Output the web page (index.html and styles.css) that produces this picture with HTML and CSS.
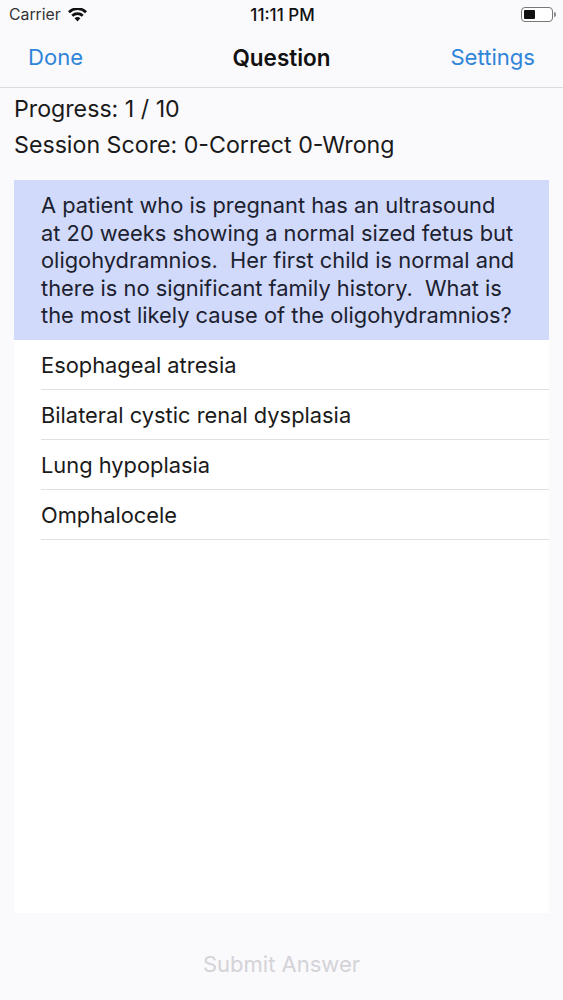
FILE: index.html
```html
<!DOCTYPE html>
<html lang="en">
<head>
<meta charset="utf-8">
<title>Question</title>
<link rel="stylesheet" href="styles.css">
</head>
<body>
<div class="screen">
  <header class="top">
    <div class="status">
      <div class="status-left">
        <span class="carrier">Carrier</span>
        <svg class="wifi" width="19" height="14" viewBox="0 0 19 14"><path d="M9.5 13.5L6.6 10.3a4.2 4.2 0 0 1 5.8 0zM5.2 8.8L3.3 6.7a9 9 0 0 1 12.4 0l-1.9 2.1a6.2 6.2 0 0 0-8.6 0zM1.9 5.2L0 3.2a13.6 13.6 0 0 1 19 0l-1.9 2a10.9 10.9 0 0 0-15.2 0z" fill="#111"/></svg>
      </div>
      <span class="time">11:11 PM</span>
      <div class="battery"><span class="battery-body"><span class="battery-fill"></span></span><span class="battery-cap"></span></div>
    </div>
    <nav class="nav">
      <span class="nav-btn">Done</span>
      <span class="nav-title">Question</span>
      <span class="nav-btn nav-btn-end">Settings</span>
    </nav>
  </header>
  <section class="stats">
    <p>Progress: 1 / 10</p>
    <p>Session Score: 0-Correct 0-Wrong</p>
  </section>
  <main class="card">
    <div class="question">A patient who is pregnant has an ultrasound at 20 weeks showing a normal sized fetus but oligohydramnios.&nbsp; Her first child is normal and there is no significant family history.&nbsp; What is the most likely cause of the oligohydramnios?</div>
    <ul class="answers">
      <li>Esophageal atresia</li>
      <li>Bilateral cystic renal dysplasia</li>
      <li>Lung hypoplasia</li>
      <li>Omphalocele</li>
    </ul>
  </main>
  <footer class="foot">Submit Answer</footer>
</div>
</body>
</html>
```
FILE: styles.css
```css
* { box-sizing: border-box; }
html, body { margin: 0; padding: 0; }
body { background: #faf9fc; font-family: "Inter", "Liberation Sans", sans-serif; color: #111; }
.screen { width: 563px; height: 1000px; display: flex; flex-direction: column; overflow: hidden; }
.top { height: 88px; background: #faf9fc; border-bottom: 1px solid #dcdcde; flex: none; }
.status { height: 29px; display: grid; grid-template-columns: 1fr auto 1fr; align-items: center; padding: 0 7px 0 9px; }
.status-left { display: flex; align-items: center; gap: 7px; }
.carrier { font-size: 15.8px; color: #333; }
.time { font-size: 17px; font-weight: 500; }
.battery { justify-self: end; display: flex; align-items: center; }
.battery-body { width: 32px; height: 15px; border: 1px solid #777; border-radius: 4px; padding: 2px; display: block; background: #fff; }
.battery-fill { display: block; width: 11px; height: 100%; background: #111; border-radius: 1px; }
.battery-cap { width: 2px; height: 5px; background: #888; border-radius: 0 2px 2px 0; margin-left: 1px; }
.nav { height: 58px; display: grid; grid-template-columns: 1fr auto 1fr; align-items: center; padding: 0 28px 2px; }
.nav-btn { font-size: 22.1px; color: #2f85d8; }
.nav-btn-end { justify-self: end; }
.nav-title { font-size: 22.5px; font-weight: 600; color: #111; }
.stats { flex: none; padding: 3px 14px 0; height: 92px; }
.stats p { margin: 0; font-size: 23.2px; line-height: 36px; color: #1a1a1a; }
.card { flex: none; margin: 0 14px; height: 733px; background: #fff; }
.question { height: 160px; background: #d1dafa; padding: 12px 34px 0 27px; font-size: 21.85px; line-height: 27.5px; color: #1c2130; }
.answers { list-style: none; margin: 0; padding: 0 0 0 27px; }
.answers li { height: 50px; line-height: 51px; font-size: 21.85px; border-bottom: 1px solid #e0e0e2; color: #1a1a1a; }
.foot { flex: 1; text-align: center; font-size: 22px; color: #d4d3d8; padding-top: 38px; }
```
